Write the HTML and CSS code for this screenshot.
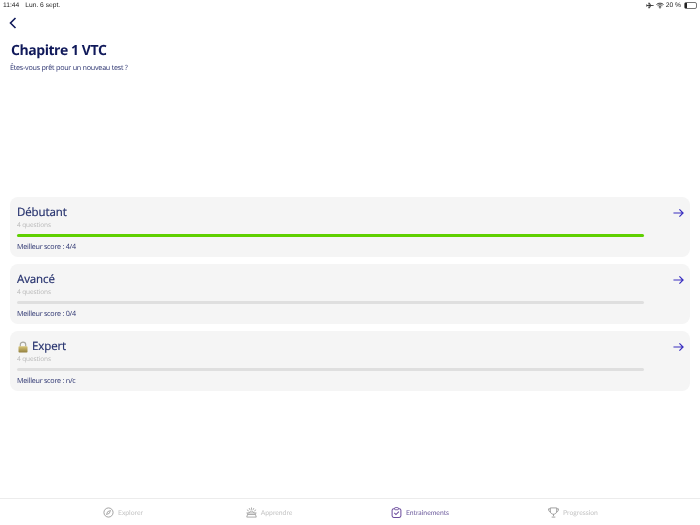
FILE: index.html
```html
<html>
<head>
    <title>Chapitre 1 VTC</title>
    <link rel="stylesheet" href="styles.css">
</head>
<body>
    <div class="page">
        <div class="status-bar">
            <span class="status-time">11:44</span>
            <span class="status-date">Lun. 6 sept.</span>
            <span class="status-right">
                <svg class="status-plane" viewBox="0 0 10 8">
                    <path d="M0.5 4H9.5M6 4L4.2 0.8H3.4L4.2 4M6 4L4.2 7.2H3.4L4.2 4M1.5 4L0.8 2.6M1.5 4L0.8 5.4" stroke="#222" stroke-width="1" fill="none"/>
                </svg>
                <svg class="status-wifi" viewBox="0 0 10 8">
                    <path d="M0.6 2.8C3 0.5 7 0.5 9.4 2.8M2 4.2C3.7 2.7 6.3 2.7 8 4.2M3.4 5.6C4.3 4.9 5.7 4.9 6.6 5.6" stroke="#222" stroke-width="1.1" fill="none"/>
                    <circle cx="5" cy="6.9" r="0.9" fill="#222"/>
                </svg>
                <span>20 %</span>
                <span class="battery"><span class="battery-level"></span></span>
            </span>
        </div>

        <div class="header">
            <svg class="back" viewBox="0 0 8 12">
                <path d="M6.5 1L1.5 6L6.5 11" stroke="#10195a" stroke-width="1.6" fill="none"/>
            </svg>
            <h1>Chapitre 1 VTC</h1>
            <p class="intro">Êtes-vous prêt pour un nouveau test ?</p>
        </div>

        <div class="levels">
            <div class="level">
                <div class="level-body">
                    <h2>Débutant</h2>
                    <p class="count">4 questions</p>
                    <div class="bar"><div class="bar-fill" style="width: 100%"></div></div>
                    <p class="score">Meilleur score : 4/4</p>
                </div>
                <svg class="arrow" viewBox="0 0 12 10">
                    <path d="M0.5 5H11M7 1L11 5L7 9" stroke="#3a2fc0" stroke-width="1.3" fill="none"/>
                </svg>
            </div>
            <div class="level">
                <div class="level-body">
                    <h2>Avancé</h2>
                    <p class="count">4 questions</p>
                    <div class="bar"></div>
                    <p class="score">Meilleur score : 0/4</p>
                </div>
                <svg class="arrow" viewBox="0 0 12 10">
                    <path d="M0.5 5H11M7 1L11 5L7 9" stroke="#3a2fc0" stroke-width="1.3" fill="none"/>
                </svg>
            </div>
            <div class="level">
                <div class="level-body">
                    <h2>
                        <svg class="lock" viewBox="0 0 10 12">
                            <defs>
                                <linearGradient id="lock-body" x1="0" y1="0" x2="0" y2="1">
                                    <stop offset="0" stop-color="#d8c67a"/>
                                    <stop offset="1" stop-color="#93803f"/>
                                </linearGradient>
                            </defs>
                            <path d="M2.3 5.5V3.6C2.3 0.4 7.7 0.4 7.7 3.6V5.5" stroke="#a8a8a0" stroke-width="1.2" fill="none"/>
                            <rect x="0.5" y="5.2" width="9" height="6.3" rx="0.8" fill="url(#lock-body)"/>
                        </svg>
                        Expert
                    </h2>
                    <p class="count">4 questions</p>
                    <div class="bar"></div>
                    <p class="score">Meilleur score : n/c</p>
                </div>
                <svg class="arrow" viewBox="0 0 12 10">
                    <path d="M0.5 5H11M7 1L11 5L7 9" stroke="#3a2fc0" stroke-width="1.3" fill="none"/>
                </svg>
            </div>
        </div>

        <div class="tabs">
            <div class="tab">
                <svg class="tab-icon" viewBox="0 0 12 12">
                    <circle cx="6" cy="6" r="5" stroke="#8f8f8f" stroke-width="0.9" fill="none"/>
                    <path d="M8.2 3.8L6.9 6.9L3.8 8.2L5.1 5.1Z" stroke="#8f8f8f" stroke-width="0.8" fill="none"/>
                </svg>
                <span>Explorer</span>
            </div>
            <div class="tab">
                <svg class="tab-icon" viewBox="0 0 12 12">
                    <path d="M6 0.5V3M3.4 1.2L4.4 3.2M8.6 1.2L7.6 3.2M1 3L3 4.4M11 3L9 4.4M0.5 6.5H11.5M2.2 8.2H9.8M0.8 11L2.2 6.5M11.2 11L9.8 6.5M0.8 11H11.2M3.5 6.5C3.5 3.8 8.5 3.8 8.5 6.5" stroke="#8f8f8f" stroke-width="0.8" fill="none"/>
                </svg>
                <span>Apprendre</span>
            </div>
            <div class="tab active">
                <svg class="tab-icon" viewBox="0 0 12 12">
                    <rect x="1.2" y="1.8" width="9.6" height="9.6" rx="1.8" stroke="#6b4a9c" stroke-width="1.1" fill="none"/>
                    <rect x="4" y="0.6" width="4" height="2.4" rx="0.6" fill="#fff" stroke="#6b4a9c" stroke-width="0.9"/>
                    <path d="M3.6 6.4L5.4 8.2L8.6 5" stroke="#6b4a9c" stroke-width="1.1" fill="none"/>
                </svg>
                <span>Entrainements</span>
            </div>
            <div class="tab">
                <svg class="tab-icon" viewBox="0 0 12 12">
                    <path d="M2.5 1H9.5V4.5C9.5 9 2.5 9 2.5 4.5ZM2.5 2H0.6C0.6 4.5 1.5 5.3 3 5.6M9.5 2H11.4C11.4 4.5 10.5 5.3 9 5.6M6 7.8V10M4 11H8" stroke="#8f8f8f" stroke-width="0.9" fill="none"/>
                </svg>
                <span>Progression</span>
            </div>
        </div>
    </div>
</body>
</html>
```

FILE: styles.css
```css
html, body {
    margin: 0;
    padding: 0;
    background-color: #fff;
}
body {
    font-family: "Open Sans", sans-serif;
    color: #10195a;
    text-rendering: geometricPrecision;
}
/* own layer, so the small text gets grey antialiasing like the reference */
.page {
    width: 700px;
    height: 525px;
    display: flex;
    flex-direction: column;
    overflow: hidden;
    will-change: transform;
}
.status-bar {
    height: 11px;
    display: flex;
    align-items: center;
    gap: 6px;
    padding: 0 3px;
    font-family: "Liberation Sans", sans-serif;
    font-size: 6.7px;
    color: #222;
}
.status-right {
    margin-left: auto;
    display: flex;
    align-items: center;
    gap: 2px;
}
.status-plane,
.status-wifi {
    width: 8px;
    height: 7px;
}
.battery {
    width: 11px;
    height: 5px;
    margin-left: 1px;
    border: 1px solid #777;
    border-radius: 2px;
    display: block;
}
.battery-level {
    display: block;
    width: 2px;
    height: 5px;
    background-color: #222;
}
.header {
    padding: 6px 10px 0;
    height: 180px;
}
.back {
    display: block;
    width: 8px;
    height: 12px;
    margin-left: -1px;
}
h1 {
    margin: 12px 0 0 1px;
    font-size: 14px;
    letter-spacing: -0.45px;
    line-height: 20px;
    font-weight: 700;
    color: #10195a;
}
.intro {
    margin: 2px 0 0;
    font-size: 7.2px;
    letter-spacing: -0.25px;
    line-height: 11px;
    color: #2c3470;
}
.levels {
    display: flex;
    flex-direction: column;
    gap: 7px;
    padding: 0 10px;
}
.level {
    height: 60px;
    box-sizing: border-box;
    padding: 8px 5px 0 7px;
    background-color: #f5f5f5;
    border-radius: 8px;
    display: flex;
    align-items: flex-start;
}
.level-body {
    width: 627px;
}
.level h2 {
    margin: 0;
    font-size: 11.5px;
    letter-spacing: -0.1px;
    line-height: 15px;
    font-weight: 400;
    color: #26326e;
    -webkit-text-stroke: 0.2px #26326e;
    display: flex;
    align-items: center;
    gap: 4px;
}
.lock {
    width: 10px;
    height: 12px;
    margin-left: 1px;
}
.count {
    margin: 0;
    font-size: 6.5px;
    letter-spacing: -0.1px;
    line-height: 10px;
    color: #b8b8b8;
}
.bar {
    height: 3px;
    margin-top: 4px;
    background-color: #dfdfdf;
    border-radius: 2px;
}
.bar-fill {
    height: 3px;
    background-color: #5fd000;
    border-radius: 2px;
}
.score {
    margin: 5px 0 0;
    font-size: 7.2px;
    letter-spacing: -0.25px;
    line-height: 11px;
    color: #2c3470;
}
.arrow {
    width: 11px;
    height: 10px;
    margin: 3px 0 0 29px;
}
.tabs {
    margin-top: auto;
    height: 25px;
    border-top: 1px solid #ececec;
    display: grid;
    grid-template-columns: 144px 148px 154px 152px;
    align-items: center;
    padding: 1px 51px 0;
}
.tab {
    display: flex;
    align-items: center;
    justify-content: center;
    gap: 4px;
    font-family: Lato, sans-serif;
    font-size: 6.8px;
    color: #c4c4c4;
}
.tab.active {
    color: #6b5a9c;
}
.tab-icon {
    width: 11px;
    height: 11px;
}
```
